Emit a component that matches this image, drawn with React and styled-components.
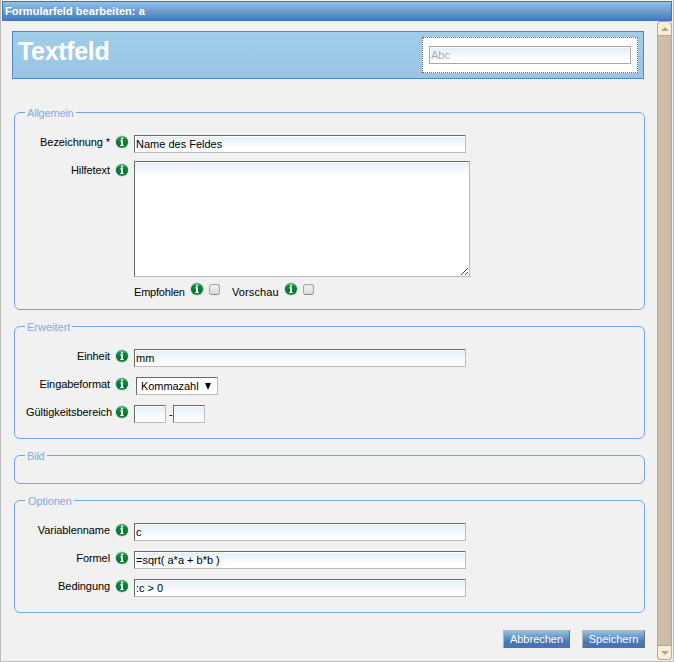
import React from "react";
import styled, { createGlobalStyle } from "styled-components";

const Global = createGlobalStyle`
  * { box-sizing: border-box; }
  body { margin: 0; background: #f1f1f1; }
  body, input, textarea, button { font-family: "Liberation Sans", Arial, sans-serif; font-size: 11px; line-height: 13px; color: #000; }
`;

const Dialog = styled.div`
  width: 674px;
  height: 662px;
  padding: 1px 1px 0;
  border: 1px solid #bbb;
  border-top: 0;
  background: #f1f1f1;
  overflow: hidden;
`;
const TitleBar = styled.header`
  height: 20px;
  padding: 3px 3px 0 2px;
  border: 1px solid #3e74b5;
  background: linear-gradient(#91c1e2, #4a78b8);
  color: #fff;
  font-weight: bold;
  letter-spacing: 0.04px;
`;
const Main = styled.div`
  display: flex;
  justify-content: space-between;
  height: 639px;
`;
const Form = styled.form`
  width: 643px;
  padding: 10px 0 0 10px;
`;
const Banner = styled.div`
  display: flex;
  justify-content: space-between;
  width: 632px;
  height: 48px;
  padding: 5px;
  border: 1px solid #4f86c6;
  background: linear-gradient(#a1cde9, #99c4e5);
`;
const Heading = styled.h1`
  margin: 0;
  font-size: 25px;
  line-height: 29px;
  letter-spacing: -0.33px;
  color: #fff;
`;
const Preview = styled.div`
  width: 216px;
  height: 36px;
  padding: 8px 6px;
  border: 1px dotted #666;
  background: #fff;
`;
const Input = styled.input`
  display: block;
  width: ${(p) => p.$w || 332}px;
  height: 18px;
  margin: 0;
  padding: 1px;
  border: 1px solid;
  border-color: ${(p) => (p.$flat ? "#a9a9a9" : "#6a6a6a #bbb #bbb #6a6a6a")};
  border-radius: 0;
  outline: 0;
  color: ${(p) => (p.$flat ? "#aaa" : "#000")};
  background: linear-gradient(#e6eef8, #fff 12px) 1px 1px no-repeat #fff;
`;
const Area = styled.textarea`
  display: block;
  width: 336px;
  height: 116px;
  margin: 0;
  padding: 2px;
  border: 1px solid;
  border-color: #6a6a6a #bbb #bbb #6a6a6a;
  outline: 0;
  resize: none;
  background: linear-gradient(#e6eef8, #fff 12px) 0 1px no-repeat #fff;
`;
const AreaWrap = styled.div`
  position: relative;
`;
const Grip = styled.svg`
  position: absolute;
  right: 2px;
  bottom: 2px;
`;
const Groups = styled.div`
  display: flex;
  flex-direction: column;
  gap: 16px;
  padding: 33px 0 0 2px;
`;
const Group = styled.section`
  width: 631px;
  height: ${(p) => p.$h}px;
  border: 1px solid #76a5e6;
  border-radius: 6px;
`;
const Legend = styled.h2`
  width: max-content;
  height: 13px;
  margin: -7px 0 ${(p) => p.$below ?? 16}px 10px;
  padding: 1px 2px 0 ${(p) => p.$inset || 2}px;
  font-size: 11px;
  line-height: 13px;
  font-weight: normal;
  letter-spacing: ${(p) => p.$track || 0}px;
  color: #84a9e6;
  background: #f1f1f1;
`;
const Row = styled.div`
  display: flex;
  align-items: flex-start;
  height: ${(p) => p.$h || 28}px;
`;
const Label = styled.label`
  width: ${(p) => (p.$wide ? 97 : 95)}px;
  margin-right: ${(p) => (p.$wide ? 3 : 5)}px;
  padding-top: 1px;
  text-align: right;
  white-space: nowrap;
  letter-spacing: -0.08px;
`;
const Icon = styled.svg`
  display: block;
  flex: none;
  width: 14px;
  height: 14px;
`;
const Control = styled.div`
  display: flex;
  margin: ${(p) => p.$top ?? 0}px 0 0 ${(p) => p.$left ?? 5}px;
`;
const Select = styled.div`
  display: flex;
  justify-content: space-between;
  width: 82px;
  height: 18px;
  padding: 2px 6px 0 4px;
  border: 1px solid;
  border-color: #6a6a6a #bbb #bbb #6a6a6a;
  background: #fff;
  letter-spacing: -0.06px;
`;
const Caret = styled.svg`
  margin-top: 3px;
`;
const Dash = styled.span`
  width: 7px;
  padding: 3px 0 0 3px;
`;
const Checks = styled.div`
  display: flex;
  align-items: flex-start;
  padding-left: 119px;
`;
const CheckLabel = styled.label`
  width: ${(p) => p.$w}px;
  padding-top: 4px;
  letter-spacing: ${(p) => p.$track}px;
`;
const Check = styled.span`
  width: 11px;
  height: 11px;
  margin: 2px 12px 0 5px;
  border: 1px solid #a3a3a3;
  border-bottom-color: #8a8a8a;
  border-radius: 3px;
  background: linear-gradient(#f0f0f0, #dcdcdc);
`;
const Actions = styled.div`
  display: flex;
  justify-content: flex-end;
  gap: 12px;
  margin-top: 17px;
  padding-right: 0;
`;
const Button = styled.button`
  width: ${(p) => p.$w}px;
  height: 18px;
  padding: 0;
  border: 1px solid;
  border-color: #b5b5b5 #6d6d6d #6d6d6d #b5b5b5;
  color: #fff;
  background: linear-gradient(#91c1e2, #4774b4 70%);
`;
const Scrollbar = styled.div`
  display: flex;
  flex-direction: column;
  justify-content: space-between;
  width: 15px;
  border: solid #aaa;
  border-width: 0 1px;
  border-radius: 4px;
  background: #cbbda6;
`;
const ScrollButton = styled.div`
  display: flex;
  align-items: center;
  justify-content: center;
  height: 15px;
  margin: 0 -1px;
  border: 1px solid #aaa;
  border-radius: ${(p) => (p.$down ? "0 0 4px 4px" : "4px 4px 0 0")};
  background: #feeece;
`;

const Info = () => (
  <Icon viewBox="0 0 14 14">
    <defs>
      <linearGradient id="green" x1="0" y1="0" x2="0" y2="1">
        <stop offset="0" stopColor="#6bb184" />
        <stop offset=".3" stopColor="#0b883c" />
        <stop offset=".8" stopColor="#007630" />
        <stop offset="1" stopColor="#35935a" />
      </linearGradient>
    </defs>
    <circle cx="7" cy="7" r="6.7" fill="#c3d9ca" />
    <circle cx="7" cy="7" r="6.1" fill="url(#green)" />
    <path d="M6 2.8h2v1.8H6zM5.2 5.3H8V10h.8v1H5.2v-1H6V6.2h-.8z" fill="#fff" />
  </Icon>
);

const Field = ({ label, wide, h, top, left, children }) => (
  <Row $h={h}>
    <Label $wide={wide}>{label}</Label>
    <Info />
    <Control $top={top} $left={left}>{children}</Control>
  </Row>
);

const Arrow = ({ down }) => (
  <svg width="8" height="4" viewBox="0 0 8 4">
    <path d={down ? "M0 0h8L4 4z" : "M0 4h8L4 0z"} fill="#a5a5a5" />
  </svg>
);

export default function App() {
  return (
    <>
      <Global />
      <Dialog>
        <TitleBar>Formularfeld bearbeiten: a</TitleBar>
        <Main>
          <Form>
            <Banner>
              <Heading>Textfeld</Heading>
              <Preview><Input $w={202} $flat defaultValue="Abc" readOnly /></Preview>
            </Banner>
            <Groups>
              <Group $h={198}>
                <Legend $track={-0.2}>Allgemein</Legend>
                <Field label="Bezeichnung *"><Input defaultValue="Name des Feldes" /></Field>
                <Field label="Hilfetext" h={119} top={-2}>
                  <AreaWrap>
                    <Area />
                    <Grip width="7" height="7" viewBox="0 0 7 7" stroke="#444">
                      <path d="M0 7L7 0M4 7L7 4" />
                    </Grip>
                  </AreaWrap>
                </Field>
                <Checks>
                  <CheckLabel $w={56} $track={-0.2}>Empfohlen</CheckLabel><Info /><Check />
                  <CheckLabel $w={52} $track={0.1}>Vorschau</CheckLabel><Info /><Check />
                </Checks>
              </Group>
              <Group $h={113}>
                <Legend>Erweitert</Legend>
                <Field label="Einheit"><Input defaultValue="mm" /></Field>
                <Field label="Eingabeformat" left={7}>
                  <Select>
                    Kommazahl
                    <Caret width="6" height="6" viewBox="0 0 6 6"><path d="M0 0h6L3.5 6h-1z" /></Caret>
                  </Select>
                </Field>
                <Field label="Gültigkeitsbereich" wide>
                  <Input $w={32} /><Dash>-</Dash><Input $w={32} />
                </Field>
              </Group>
              <Group $h={29}>
                <Legend $below={0} $track={-0.2}>Bild</Legend>
              </Group>
              <Group $h={113}>
                <Legend $inset={3} $track={-0.1}>Optionen</Legend>
                <Field label="Variablenname"><Input defaultValue="c" /></Field>
                <Field label="Formel"><Input defaultValue="=sqrt( a*a + b*b )" /></Field>
                <Field label="Bedingung"><Input defaultValue=":c > 0" /></Field>
              </Group>
            </Groups>
            <Actions>
              <Button type="button" $w={67}>Abbrechen</Button>
              <Button type="button" $w={63}>Speichern</Button>
            </Actions>
          </Form>
          <Scrollbar>
            <ScrollButton><Arrow /></ScrollButton>
            <ScrollButton $down><Arrow down /></ScrollButton>
          </Scrollbar>
        </Main>
      </Dialog>
    </>
  );
}
